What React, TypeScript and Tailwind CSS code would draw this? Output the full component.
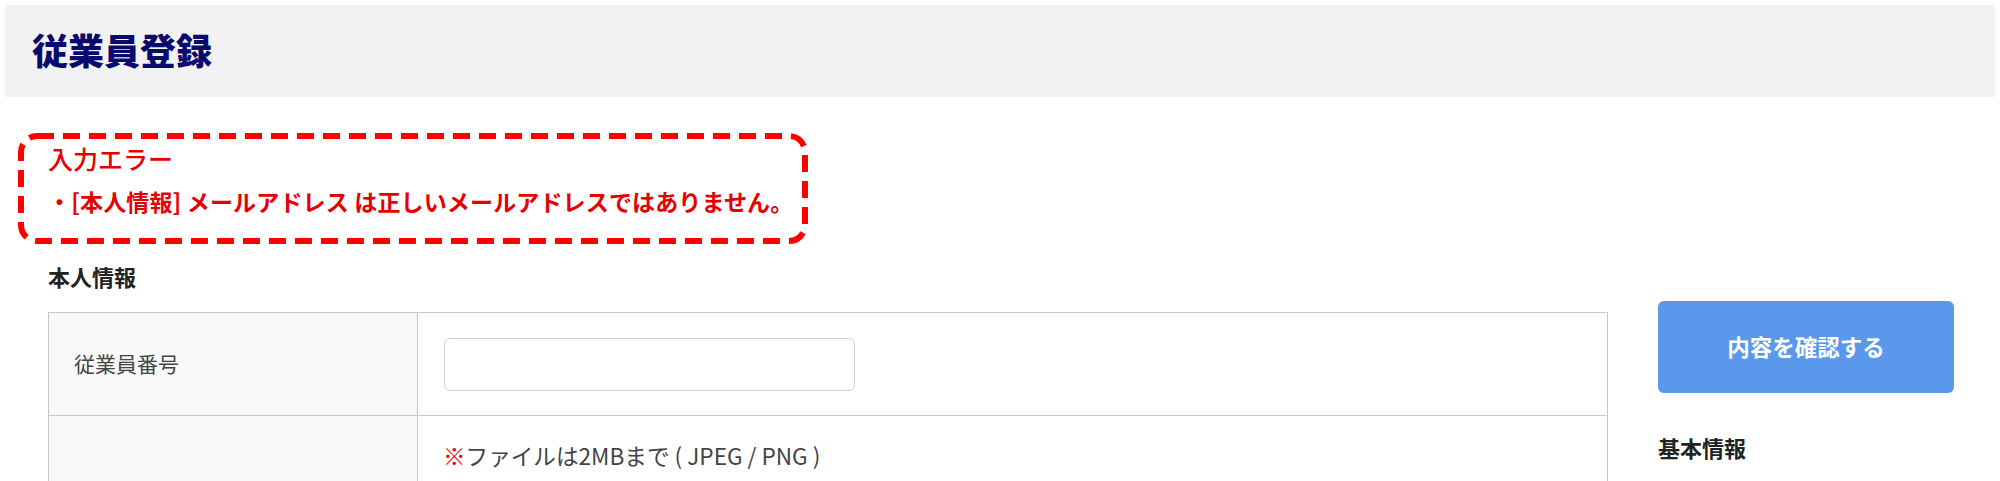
const FONT = '"Noto Sans CJK JP", "Noto Sans", sans-serif'

function ErrorBox() {
  return (
    <div className="relative ml-[18px] mt-[36px] w-[790px] h-[111px] pl-[30px] pt-[6px]">
      <svg className="absolute inset-0 pointer-events-none" width="790" height="111" viewBox="0 0 790 111">
        <rect
          x="3"
          y="3"
          width="784"
          height="105"
          rx="16"
          fill="none"
          stroke="#ff0000"
          strokeWidth="6"
          strokeDasharray="17 9"
        />
      </svg>
      <p className="pt-[4px] text-[25px] leading-[30px] font-medium text-[#e60000]">入力エラー</p>
      <p className="mt-[13px] text-[23px] leading-[30px] font-bold text-[#e60000] whitespace-nowrap tracking-[0.15px]">
        ・[本人情報] メールアドレス は正しいメールアドレスではありません。
      </p>
    </div>
  )
}

function FormTable() {
  return (
    <div className="mt-[20px] border border-[#c8c8c8]">
      <div className="flex">
        <div className="w-[369px] shrink-0 border-r border-[#c8c8c8] bg-[#f9f9f9] flex items-center pl-[25px] text-[21px] text-[#444]">
          従業員番号
        </div>
        <div className="flex-1 pt-[25px] pb-[24px] pl-[26px]">
          <input
            type="text"
            className="block w-[411px] h-[53px] rounded-[6px] border border-[#cfcfcf] bg-white px-3 text-[20px] outline-none"
          />
        </div>
      </div>
      <div className="flex border-t border-[#c8c8c8]">
        <div className="w-[369px] shrink-0 border-r border-[#c8c8c8] bg-[#f9f9f9]" />
        <div className="flex-1 pt-[25px] pb-[40px] pl-[25px]">
          <p className="text-[22.6px] leading-[30px] text-[#444] whitespace-nowrap">
            <span className="text-[#e60000]">※</span>ファイルは2MBまで ( JPEG / PNG )
          </p>
          <div className="mt-[20px] w-[240px] h-[180px] border border-dashed border-[#c8c8c8] bg-[#fafafa]" />
        </div>
      </div>
    </div>
  )
}

export default function App() {
  return (
    <div className="min-h-screen bg-white pt-[5px]" style={{ fontFamily: FONT }}>
      <header className="mx-[5px] h-[92px] bg-[#f2f2f2] flex items-center pl-[27px] pb-[5px]">
        <h1 className="text-[36px] leading-none font-black text-[#0a0a6e]">従業員登録</h1>
      </header>

      <ErrorBox />

      <div className="flex pl-[48px]">
        <main className="w-[1560px] shrink-0">
          <h2 className="mt-[16px] text-[22px] leading-[32px] font-bold text-[#222]">本人情報</h2>
          <FormTable />
        </main>

        <aside className="ml-[50px] w-[296px] shrink-0 pt-[57px]">
          <button className="w-full h-[92px] rounded-[6px] bg-[#5a98ec] text-white text-[22.5px] font-bold">
            内容を確認する
          </button>
          <h3 className="mt-[38px] text-[22px] leading-[32px] font-bold text-[#222]">基本情報</h3>
        </aside>
      </div>
    </div>
  )
}
